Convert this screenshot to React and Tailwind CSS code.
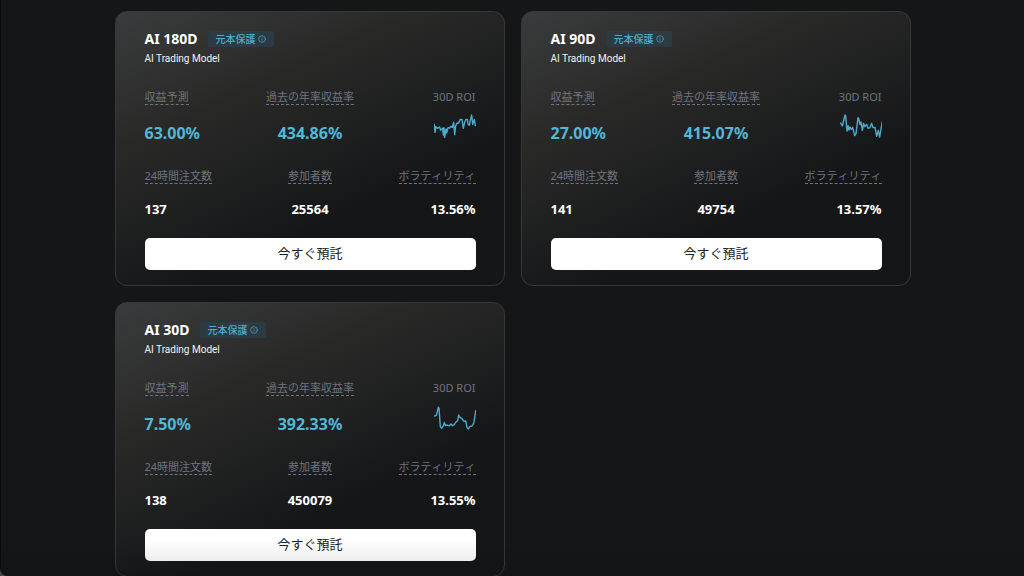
import { Info } from 'lucide-react'

const plans = [
  {
    name: 'AI 180D',
    forecast: '63.00%',
    apr: '434.86%',
    orders: '137',
    members: '25564',
    volatility: '13.56%',
    roi: '43,56 45,80 48,63 53,68 59,64 62,73 65,71 68,68 70,88 72,66 74,95 78,70 80,82 84,66 89,67 93,62 97,65 101,50 104,87 107,61 111,52 115,53 121,41 126,41 130,68 134,50 138,41 142,41 144,55 148,59 151,44 155,28 158,56 163,41 166,60',
  },
  {
    name: 'AI 90D',
    forecast: '27.00%',
    apr: '415.07%',
    orders: '141',
    members: '49754',
    volatility: '13.57%',
    roi: '44,52 49,61 57,28 59,30 63,76 66,60 69,73 72,64 76,71 80,65 86,90 90,84 96,36 98,38 102,57 105,49 109,74 113,53 116,63 122,56 126,68 132,66 137,53 141,66 147,65 152,92 157,74 161,94 165,70 169,48',
  },
  {
    name: 'AI 30D',
    forecast: '7.50%',
    apr: '392.33%',
    orders: '138',
    members: '450079',
    volatility: '13.55%',
    roi: '43,58 49,56 55,32 57,34 61,90 65,95 70,87 73,77 76,87 82,85 87,88 93,82 97,87 103,84 108,76 113,72 116,55 120,62 126,66 132,74 137,73 141,92 145,97 150,89 156,88 161,80 164,64 167,42',
  },
]

function Stat({ label, value, className = '', valueClass, plain }) {
  return (
    <div className={`flex flex-col ${className}`}>
      <dt className={`h-4 text-[11px] leading-[15px] whitespace-nowrap text-[#6e7480] [font-kerning:none] ${plain ? '' : 'border-b border-dashed border-[#6e7480]'}`}>
        {label}
      </dt>
      <dd className={valueClass}>{value}</dd>
    </div>
  )
}

function Sparkline({ points }) {
  return (
    <svg viewBox="42 22 126 78" className="h-[26px] w-[42px]" fill="none" role="img" aria-label="30D ROI">
      <polyline points={points} stroke="#4badcd" strokeWidth="4.2" strokeLinejoin="round" strokeLinecap="round" />
    </svg>
  )
}

function PlanCard({ plan }) {
  const big = 'mt-4 text-base leading-6 font-bold text-[#53b7d8]'
  const small = 'mt-[15px] text-[13px] leading-5 font-bold text-white'

  return (
    <article className="rounded-xl border border-[#37383a] bg-linear-[155deg,#3a3b3c_0%,#282927_31%,#151618_68%] pt-[17px] pr-7 pb-[15px] pl-[29px]">
      <header>
        <div className="flex items-center gap-2.5">
          <h2 className="text-sm leading-5 font-bold text-white">{plan.name}</h2>
          <span className="flex h-4 items-center gap-0.5 rounded-xs bg-[#2c3b41] px-2 text-[10px] font-medium text-[#4badcd]">
            元本保護
            <Info size={8} strokeWidth={2} />
          </span>
        </div>
        <p className="mt-0.5 font-[Roboto] text-[10px] leading-4 text-[#f2f2f2]">AI Trading Model</p>
      </header>

      <dl className="mt-[22px] grid grid-cols-3">
        <Stat label="収益予測" value={plan.forecast} className="items-start" valueClass={big} />
        <Stat label="過去の年率収益率" value={plan.apr} className="items-center" valueClass={big} />
        <Stat
          label="30D ROI"
          value={<Sparkline points={plan.roi} />}
          className="items-end"
          valueClass="mt-2"
          plain
        />
      </dl>

      <dl className="mt-[23px] grid grid-cols-3">
        <Stat label="24時間注文数" value={plan.orders} className="items-start" valueClass={small} />
        <Stat label="参加者数" value={plan.members} className="items-center" valueClass={small} />
        <Stat label="ボラティリティ" value={plan.volatility} className="items-end" valueClass={small} />
      </dl>

      <button type="button" className="mt-[19px] h-8 w-full rounded-[5px] bg-white text-[13px] text-[#222]">
        今すぐ預託
      </button>
    </article>
  )
}

export default function App() {
  return (
    <div className="h-screen bg-[#4a4548] font-['Noto_Sans','Noto_Sans_CJK_JP',sans-serif]">
      <main className="relative h-full overflow-hidden rounded-bl-lg border-l border-[#090a0b] bg-[#151618] pt-[11px]">
        <div className="mx-auto grid max-w-[796px] grid-cols-2 gap-4">
          {plans.map(plan => (
            <PlanCard key={plan.name} plan={plan} />
          ))}
        </div>
        <div className="pointer-events-none absolute inset-x-0 bottom-0 h-9 bg-linear-to-b from-transparent to-black/12" />
      </main>
    </div>
  )
}
